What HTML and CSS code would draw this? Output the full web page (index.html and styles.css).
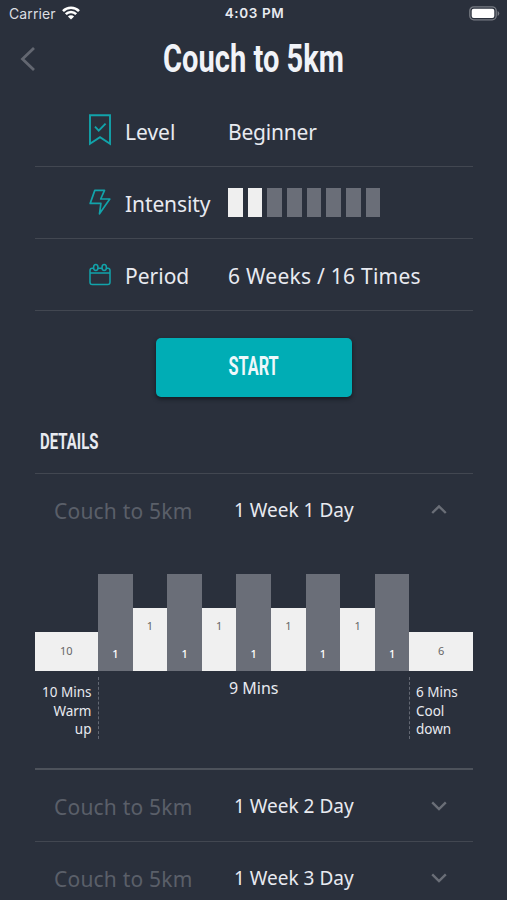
FILE: index.html
```html
<!DOCTYPE html>
<html lang="en">
<head>
<meta charset="utf-8">
<title>Couch to 5km</title>
<link rel="stylesheet" href="styles.css">
</head>
<body>
<div class="screen">
  <div class="status">
    <div class="carrier"><span class="carrier-name">Carrier</span>
      <svg class="wifi" width="18" height="14" viewBox="0 0 18 14" fill="none" stroke="#fff" stroke-width="2.6"><path d="M1 5.1a11.3 11.3 0 0 1 16 0M3.8 8.2a7.4 7.4 0 0 1 10.4 0"/><path d="M9 13.6 5.9 10.5a4.4 4.4 0 0 1 6.2 0z" fill="#fff" stroke="none"/></svg>
    </div>
    <span class="clock">4:03 PM</span>
    <svg class="battery" width="31" height="15" viewBox="0 0 31 15"><rect x=".8" y=".8" width="26.4" height="13" rx="4" fill="none" stroke="#777b83" stroke-width="1.3"/><rect x="2.7" y="2.7" width="22.6" height="9.2" rx="2" fill="#fff"/><path d="M28.6 5v5q1.7-.8 1.7-2.5T28.6 5z" fill="#777b83"/></svg>
  </div>
  <header class="title-bar">
    <svg class="back" width="16" height="26" viewBox="0 0 16 26" fill="none" stroke="#636771" stroke-width="2.8"><path d="M14 2 2.5 13 14 24"/></svg>
    <h1 class="title">Couch to 5km</h1>
  </header>
  <main class="content">
    <div class="info">
      <svg class="icon" width="24" height="34" viewBox="0 0 24 34" fill="none" stroke="#12a3aa" stroke-width="1.9"><path d="M2 2.2h20v28.6l-10-6.6-10 6.6z"/><path d="m7 13.6 3.7 4 6.9-7"/></svg>
      <span class="label">Level</span><span class="value beginner">Beginner</span>
    </div>
    <div class="info">
      <svg class="icon" width="24" height="34" viewBox="0 0 24 34" fill="none" stroke="#12a3aa" stroke-width="1.7" stroke-linejoin="round"><path d="M6.8 4.4h9.7l-3.8 8.6h9.1l-10.3 14.8 1.4-10.4H2.2z"/></svg>
      <span class="label intensity">Intensity</span>
      <div class="meter"><i class="on"></i><i class="on"></i><i></i><i></i><i></i><i></i><i></i><i></i></div>
    </div>
    <div class="info">
      <svg class="icon" width="24" height="34" viewBox="0 0 24 34" fill="none" stroke="#12a3aa" stroke-width="1.5"><path d="M5.4 10.3H4.3Q2 10.3 2 12.5v11.7q0 2.3 2.3 2.3h15.4q2.3 0 2.3-2.3V12.5q0-2.2-2.3-2.2h-.9M9.8 10.3h4.5M2 15.1h20"/><ellipse cx="7.8" cy="9.6" rx="2.2" ry="3"/><ellipse cx="16.2" cy="9.6" rx="2.2" ry="3"/></svg>
      <span class="label period">Period</span><span class="value weeks">6 Weeks / 16 Times</span>
    </div>
    <button class="start"><span>START</span></button>
    <h2 class="details"><span>DETAILS</span></h2>
    <section class="day open">
      <div class="day-head"><span class="plan">Couch to 5km</span><span class="day-name">1 Week 1 Day</span>
        <svg class="chevron" width="18" height="12" viewBox="0 0 18 12"><path d="m2.2 9 6.8-6.6 6.8 6.6"/></svg></div>
      <div class="chart">
        <div class="bar easy">10</div>
        <div class="bar run">1</div><div class="bar walk">1</div>
        <div class="bar run">1</div><div class="bar walk">1</div>
        <div class="bar run">1</div><div class="bar walk">1</div>
        <div class="bar run">1</div><div class="bar walk">1</div>
        <div class="bar run">1</div>
        <div class="bar easy">6</div>
      </div>
      <div class="legend">
        <div class="note warm">10 Mins<br>Warm<br>up</div>
        <div class="total">9 Mins</div>
        <div class="note cool">6 Mins<br>Cool<br>down</div>
      </div>
    </section>
    <section class="day"><div class="day-head"><span class="plan">Couch to 5km</span><span class="day-name">1 Week 2 Day</span>
      <svg class="chevron" width="18" height="12" viewBox="0 0 18 12"><path d="m2.2 2.4 6.8 6.6 6.8-6.6"/></svg></div></section>
    <section class="day"><div class="day-head"><span class="plan">Couch to 5km</span><span class="day-name">1 Week 3 Day</span>
      <svg class="chevron" width="18" height="12" viewBox="0 0 18 12"><path d="m2.2 2.4 6.8 6.6 6.8-6.6"/></svg></div></section>
  </main>
</div>
</body>
</html>
```
FILE: styles.css
```css
* { box-sizing: border-box; }
body { margin: 0; background: #2a303c; color: #e8eaf0; font-family: "Noto Sans", sans-serif; }
.screen { width: 507px; height: 900px; overflow: hidden; }
.status { height: 26px; padding: 0 7px 0 9px; display: grid; grid-template-columns: 1fr auto 1fr; align-items: center; font-family: Inter, sans-serif; }
.carrier { display: flex; align-items: center; gap: 6px; font-size: 14px; letter-spacing: .1px; color: #dcdee2; }
.clock { font-size: 13.5px; font-weight: 600; letter-spacing: .6px; }
.battery { justify-self: end; }
.title-bar { height: 68px; padding: 0 20px; display: grid; grid-template-columns: 40px 1fr 40px; align-items: center; }
.title-bar > * { margin-bottom: 2px; }
.title { margin-top: 0; text-align: center; white-space: nowrap; font: 700 38px/50px Roboto, sans-serif; transform: scaleX(.765); color: #f1f3f8; }
.content { width: 438.5px; margin-left: 34.5px; }
.info { height: 72px; padding: 0 0 0 53px; display: flex; align-items: center; border-bottom: 1px solid #424751; }
.info:first-child { height: 73px; }
.icon { flex: none; }
.label { width: 103.5px; margin-left: 13.5px; margin-right: -.5px; padding-top: 3px; font-size: 21px; line-height: 30px; }
.intensity { letter-spacing: -.1px; }
.value { padding-top: 3px; font-size: 21px; line-height: 30px; }
.beginner { letter-spacing: -.2px; }
.weeks { letter-spacing: .25px; }
.meter { display: flex; gap: 5.1px; }
.meter i { width: 14.6px; height: 29px; background: #6a6e78; }
.meter .on { background: #efefef; }
.start { display: block; width: 196px; height: 59px; margin: 27px auto 0; padding: 0; border: 0; border-radius: 5px; background: #00adb5; box-shadow: 0 2px 4px #151a20; color: #eef8fb; font: 700 25px/57px Roboto, sans-serif; }
.start span, .details span { display: inline-block; transform: scaleX(.65); }
.start span { margin-bottom: 2px; }
.details { height: 77px; margin: 0; padding: 32px 0 0 5px; border-bottom: 1px solid #424751; font: 700 22px/26px Roboto, sans-serif; }
.details span { transform: scaleX(.68); transform-origin: left; }
.day { border-bottom: 1px solid #424751; }
.day.open { height: 296px; border-color: #4d525b; border-bottom-width: 2px; }
.day-head { height: 71px; padding: 0 25px 0 19.5px; display: flex; align-items: center; }
.plan { width: 180px; padding-top: 2px; font-size: 21px; color: #5a5f69; letter-spacing: .2px; }
.day-name { padding-top: 1px; font-size: 19px; }
.chevron { margin-left: auto; fill: none; stroke: #6a6e77; stroke-width: 2.4; }
.chart { height: 97px; margin-top: 29px; display: flex; align-items: flex-end; text-align: center; font-size: 11px; }
.bar { flex: 1; }
.easy { flex: none; width: 63.5px; height: 39px; background: #f0f0f0; color: #666; line-height: 37px; }
.run { height: 97px; padding-top: 72px; background: #6a6e78; color: #fff; font-weight: 500; line-height: 16px; }
.walk { height: 63px; padding-top: 10px; background: #f0f0f0; color: #666; line-height: 16px; }
.legend { padding-top: 6px; display: flex; justify-content: space-between; }
.note { width: 64px; height: 62px; padding-top: 6px; font-size: 13.5px; line-height: 18.5px; }
.warm { padding-right: 6px; border-right: 1px dashed #646974; text-align: right; }
.cool { padding-left: 6px; border-left: 1px dashed #646974; }
.total { font-size: 16px; line-height: 22px; }
```
